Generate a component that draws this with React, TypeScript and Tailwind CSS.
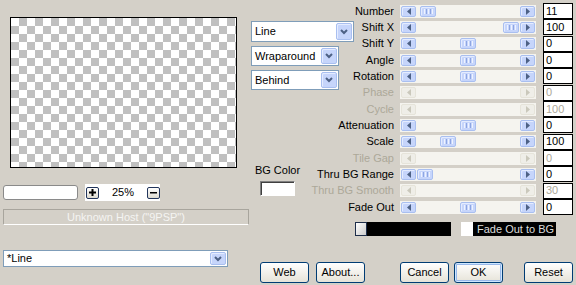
import React from 'react'

type Row = { label: string; value: string; thumb?: number; disabled?: boolean }

const rows: Row[] = [
  { label: 'Number', value: '11', thumb: 4 },
  { label: 'Shift X', value: '100', thumb: 87 },
  { label: 'Shift Y', value: '0', thumb: 44 },
  { label: 'Angle', value: '0', thumb: 44 },
  { label: 'Rotation', value: '0', thumb: 44 },
  { label: 'Phase', value: '0', disabled: true },
  { label: 'Cycle', value: '100', disabled: true },
  { label: 'Attenuation', value: '0', thumb: 44 },
  { label: 'Scale', value: '100', thumb: 24 },
  { label: 'Tile Gap', value: '0', disabled: true },
  { label: 'Thru BG Range', value: '0', thumb: 1 },
  { label: 'Thru BG Smooth', value: '30', disabled: true },
  { label: 'Fade Out', value: '0', thumb: 44 },
]

const ArrowBtn = ({ dir, disabled }: { dir: 'left' | 'right'; disabled?: boolean }) => (
  <div
    className={
      disabled
        ? 'w-[15px] h-[11px] rounded-[2px] border border-[#e6e4da] bg-[#efeee8] flex items-center justify-center'
        : 'w-[15px] h-[11px] rounded-[2px] border border-[#a9bff0] bg-[#c6d5fb] shadow-[inset_1px_1px_0_#e4ecff] flex items-center justify-center'
    }
  >
    <svg width="4" height="7" viewBox="0 0 4 7">
      <polygon
        points={dir === 'left' ? '4,0 0,3.5 4,7' : '0,0 4,3.5 0,7'}
        fill={disabled ? '#cac8bb' : '#4d6185'}
      />
    </svg>
  </div>
)

const Thumb = ({ offset }: { offset: number }) => (
  <div
    className="w-[16px] h-[11px] rounded-[2px] border border-[#a9bff0] bg-[#c6d5fb] shadow-[inset_1px_1px_0_#e4ecff] flex items-center justify-center gap-[1px]"
    style={{ marginLeft: offset }}
  >
    <div className="w-[1px] h-[5px] bg-[#eef3ff]" />
    <div className="w-[1px] h-[5px] bg-[#8ea6e2]" />
    <div className="w-[1px] h-[5px] bg-[#eef3ff]" />
    <div className="w-[1px] h-[5px] bg-[#8ea6e2]" />
    <div className="w-[1px] h-[5px] bg-[#eef3ff]" />
  </div>
)

const Scroll = ({ thumb, disabled }: { thumb?: number; disabled?: boolean }) => (
  <div className="w-[136px] h-[13px] px-[1px] bg-[#f5f4ef] flex items-center">
    <ArrowBtn dir="left" disabled={disabled} />
    <div className="flex-1 flex items-center">{thumb !== undefined && !disabled && <Thumb offset={thumb} />}</div>
    <ArrowBtn dir="right" disabled={disabled} />
  </div>
)

const Chevron = () => (
  <div className="w-[16px] h-full rounded-[2px] border border-[#a9bff0] bg-[#c6d5fb] shadow-[inset_1px_1px_0_#e4ecff] flex items-center justify-center">
    <svg width="8" height="6" viewBox="0 0 8 6">
      <polyline points="1,1 4,4 7,1" fill="none" stroke="#4d6185" strokeWidth="2" />
    </svg>
  </div>
)

const Combo = ({ text, className }: { text: string; className: string }) => (
  <div className={`border border-[#7f9db9] bg-white flex items-center p-[1px] ${className}`}>
    <span className="flex-1 pl-[2px] text-black">{text}</span>
    <Chevron />
  </div>
)

const Button = ({ text, ml, primary }: { text: string; ml: string; primary?: boolean }) => (
  <div
    className={`${ml} w-[49px] h-[21px] rounded-[3px] border border-[#003c74] bg-linear-to-b from-white to-[#e6e3d8] flex items-center justify-center text-black ${
      primary ? 'shadow-[inset_0_0_0_1px_#cee7ff,inset_0_0_0_2px_#98b8ea]' : ''
    }`}
  >
    {text}
  </div>
)

export default function App() {
  return (
    <div className="w-[576px] h-[285px] bg-[#d4d0c8] flex overflow-hidden font-['Liberation_Sans',Arial,sans-serif] text-[11px] leading-[13px] text-black">
      {/* left column */}
      <div className="w-[250px] flex flex-col pt-[17px]">
        <div className="ml-[10px] w-[227px] h-[151px] border border-black bg-[conic-gradient(#c0c0c0_0_25%,#fff_0_50%,#c0c0c0_0_75%,#fff_0)] bg-[length:16px_16px]" />
        <div className="mt-[16px] flex items-center">
          <div className="ml-[3px] w-[75px] h-[15px] rounded-[3px] border border-[#8a8a8a] bg-white" />
          <div className="ml-[7px] w-[75px] h-[17px] bg-white flex items-center">
            <div className="ml-[1px] w-[13px] h-[12px] rounded-[2px] border border-[#22355c] bg-linear-to-b from-white to-[#dedbd0] flex items-center justify-center">
              <svg width="7" height="7" viewBox="0 0 7 7">
                <rect x="2.5" y="0" width="2" height="7" fill="#000" />
                <rect x="0" y="2.5" width="7" height="2" fill="#000" />
              </svg>
            </div>
            <span className="w-[48px] text-center">25%</span>
            <div className="w-[13px] h-[12px] rounded-[2px] border border-[#22355c] bg-linear-to-b from-white to-[#dedbd0] flex items-center justify-center">
              <svg width="7" height="7" viewBox="0 0 7 7">
                <rect x="0" y="3" width="7" height="1.5" fill="#000" />
              </svg>
            </div>
          </div>
        </div>
        <div className="mt-[8px] ml-[3px] w-[246px] h-[16px] border border-[#a8a59d] border-b-white flex items-center justify-center text-[#f4f4f2]">
          Unknown Host ("9PSP")
        </div>
        <Combo text="*Line" className="mt-[25px] ml-[3px] w-[225px] h-[17px]" />
      </div>

      {/* right section */}
      <div className="flex-1 flex flex-col">
        <div className="flex">
          <div className="w-[105px] flex flex-col">
            <Combo text="Line" className="mt-[21px] ml-[1px] w-[103px] h-[21px]" />
            <Combo text="Wraparound" className="mt-[4px] ml-[1px] w-[88px] h-[20px]" />
            <Combo text="Behind" className="mt-[4px] ml-[1px] w-[88px] h-[20px]" />
            <div className="mt-[74px] ml-[5px] w-[45px] flex flex-col items-center">
              <span className="whitespace-nowrap">BG Color</span>
              <div className="mt-[4px] w-[35px] h-[15px] border border-[#808080] border-b-white border-r-white bg-white shadow-[inset_1px_1px_0_#404040]" />
            </div>
          </div>
          <div className="flex flex-col pt-[3px]">
            {rows.map((r) => (
              <div key={r.label} className="h-[16.33px] flex items-center">
                <div
                  className={`w-[41px] pr-[2px] flex justify-end whitespace-nowrap ${
                    r.disabled ? 'text-[#aca899]' : 'text-black'
                  }`}
                >
                  {r.label}
                </div>
                <div className="ml-[4px]">
                  <Scroll thumb={r.thumb} disabled={r.disabled} />
                </div>
                <div
                  className={`ml-[7px] w-[30px] h-[16px] border border-black bg-white pl-[2px] flex items-center ${
                    r.disabled ? 'text-[#aca899]' : 'text-black'
                  }`}
                >
                  {r.value}
                </div>
              </div>
            ))}
          </div>
        </div>

        <div className="mt-[7px] flex items-center">
          <div className="ml-[105px] w-[12px] h-[14px] border border-[#1e2e4a] bg-linear-to-br from-white to-[#cbcbcb]" />
          <div className="w-[84px] h-[14px] bg-black" />
          <div className="ml-[10px] w-[12px] h-[14px] bg-white" />
          <div className="w-[83px] h-[14px] bg-black text-[#dcdcdc] pl-[4px] flex items-center whitespace-nowrap">
            Fade Out to BG
          </div>
        </div>

        <div className="mt-[26px] flex items-center">
          <Button text="Web" ml="ml-[10px]" />
          <Button text="About..." ml="ml-[7px]" />
          <Button text="Cancel" ml="ml-[35px]" />
          <Button text="OK" ml="ml-[5px]" primary />
          <Button text="Reset" ml="ml-[21px]" />
        </div>
      </div>
    </div>
  )
}
